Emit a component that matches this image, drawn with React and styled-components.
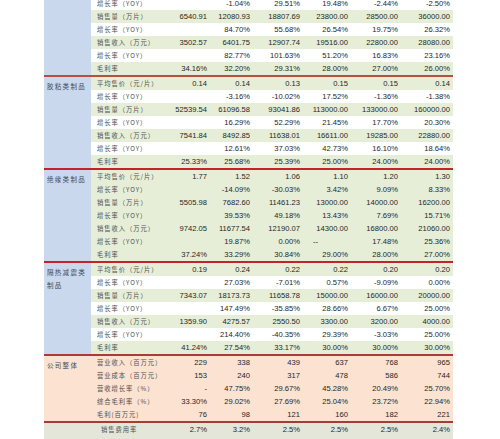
import styled, { createGlobalStyle } from "styled-components"

const GlobalStyle = createGlobalStyle`
    html, body {
        margin: 0;
        padding: 0;
        background: #ffffff;
        overflow: hidden;
    }
    #root {
        height: 439px;
        overflow: hidden;
    }
`

const palette = {
    green: '#e6eed8',
    white: '#ffffff',
    peach: '#fbe2d1',
    gray: '#e4e6da',
    blue: '#c9d8ec',
}

const Page = styled.div`
    padding-left: 44px;
`

const Table = styled.div`
    width: 409px;
    margin-top: -3px;
    display: flex;
    flex-direction: column;
`

const Section = styled.div`
    display: flex;
    border-top: ${({ $line }) => ($line ? `2px solid ${$line}` : 'none')};
`

const Category = styled.div`
    width: 47px;
    flex: none;
    box-sizing: border-box;
    padding: 3px 0 0 3px;
    background: ${({ $bg }) => $bg};
    font-family: "Noto Sans CJK SC", sans-serif;
    font-weight: 400;
    font-size: 6.5px;
    letter-spacing: 1.3px;
    line-height: 13px;
    color: #3f4a60;
    white-space: pre-line;
`

const Rows = styled.div`
    flex: 1;
    display: flex;
    flex-direction: column;
`

const Row = styled.div`
    display: grid;
    grid-template-columns: 70px 49px 43px 50px 48px 50px 52px;
    height: 13px;
    align-items: center;
    background: ${({ $bg }) => $bg};
`

const Label = styled.div`
    padding-left: ${({ $indent }) => ($indent ? 10 : 6)}px;
    font-family: "Noto Sans CJK SC", sans-serif;
    font-weight: 400;
    font-size: 6.3px;
    letter-spacing: 0.95px;
    color: #505050;
    white-space: nowrap;
    line-height: 13px;
`

const Num = styled.div`
    text-align: ${({ $left }) => ($left ? 'left' : 'right')};
    padding: ${({ $left }) => ($left ? '0 0 0 10px' : '0 3px 0 0')};
    font-family: "Liberation Sans", Arial, sans-serif;
    font-size: 7.6px;
    color: #262626;
    white-space: nowrap;
    line-height: 13px;
`

const G = palette.green
const W = palette.white

const sections = [
    {
        category: '',
        catBg: palette.blue,
        rows: [
            ['增长率（YOY）', W, ['', '-1.04%', '29.51%', '19.48%', '-2.44%', '-2.50%']],
            ['销售量（万片）', G, ['6540.91', '12080.93', '18807.69', '23800.00', '28500.00', '36000.00']],
            ['增长率（YOY）', W, ['', '84.70%', '55.68%', '26.54%', '19.75%', '26.32%']],
            ['销售收入（万元）', G, ['3502.57', '6401.75', '12907.74', '19516.00', '22800.00', '28080.00']],
            ['增长率（YOY）', W, ['', '82.77%', '101.63%', '51.20%', '16.83%', '23.16%']],
            ['毛利率', G, ['34.16%', '32.20%', '29.31%', '28.00%', '27.00%', '26.00%']],
        ],
    },
    {
        category: '胶粘类制品',
        catBg: palette.blue,
        line: '#b4513f',
        rows: [
            ['平均售价（元/片）', G, ['0.14', '0.14', '0.13', '0.15', '0.15', '0.14']],
            ['增长率（YOY）', W, ['', '-3.16%', '-10.02%', '17.52%', '-1.36%', '-1.38%']],
            ['销售量（万片）', G, ['52539.54', '61096.58', '93041.86', '113000.00', '133000.00', '160000.00']],
            ['增长率（YOY）', W, ['', '16.29%', '52.29%', '21.45%', '17.70%', '20.30%']],
            ['销售收入（万元）', G, ['7541.84', '8492.85', '11638.01', '16611.00', '19285.00', '22880.00']],
            ['增长率（YOY）', W, ['', '12.61%', '37.03%', '42.73%', '16.10%', '18.64%']],
            ['毛利率', G, ['25.33%', '25.68%', '25.39%', '25.00%', '24.00%', '24.00%']],
        ],
    },
    {
        category: '绝缘类制品',
        catBg: palette.blue,
        line: '#c3232c',
        rows: [
            ['平均售价（元/片）', G, ['1.77', '1.52', '1.06', '1.10', '1.20', '1.30']],
            ['增长率（YOY）', G, ['', '-14.09%', '-30.03%', '3.42%', '9.09%', '8.33%']],
            ['销售量（万片）', G, ['5505.98', '7682.60', '11461.23', '13000.00', '14000.00', '16200.00']],
            ['增长率（YOY）', G, ['', '39.53%', '49.18%', '13.43%', '7.69%', '15.71%']],
            ['销售收入（万元）', G, ['9742.05', '11677.54', '12190.07', '14300.00', '16800.00', '21060.00']],
            ['增长率（YOY）', G, ['', '19.87%', '0.00%', { v: '--', left: true }, '17.48%', '25.36%']],
            ['毛利率', G, ['37.24%', '33.29%', '30.84%', '29.00%', '28.00%', '27.00%']],
        ],
    },
    {
        category: '隔热减震类\n制品',
        catBg: palette.blue,
        line: '#c3232c',
        rows: [
            ['平均售价（元/片）', G, ['0.19', '0.24', '0.22', '0.22', '0.20', '0.20']],
            ['增长率（YOY）', W, ['', '27.03%', '-7.01%', '0.57%', '-9.09%', '0.00%']],
            ['销售量（万片）', G, ['7343.07', '18173.73', '11658.78', '15000.00', '16000.00', '20000.00']],
            ['增长率（YOY）', W, ['', '147.49%', '-35.85%', '28.66%', '6.67%', '25.00%']],
            ['销售收入（万元）', G, ['1359.90', '4275.57', '2550.50', '3300.00', '3200.00', '4000.00']],
            ['增长率（YOY）', W, ['', '214.40%', '-40.35%', '29.39%', '-3.03%', '25.00%']],
            ['毛利率', G, ['41.24%', '27.54%', '33.17%', '30.00%', '30.00%', '30.00%']],
        ],
    },
    {
        category: '公司整体',
        catBg: palette.peach,
        line: '#ad3b35',
        rows: [
            ['营业收入（百万元）', palette.peach, ['229', '338', '439', '637', '768', '965']],
            ['营业成本（百万元）', palette.peach, ['153', '240', '317', '478', '586', '744']],
            ['营收增长率（%）', palette.peach, ['-', '47.75%', '29.67%', '45.28%', '20.49%', '25.70%']],
            ['综合毛利率（%）', palette.peach, ['33.30%', '29.02%', '27.69%', '25.04%', '23.72%', '22.94%']],
            ['毛利(百万元)', palette.peach, ['76', '98', '121', '160', '182', '221']],
        ],
    },
    {
        category: '',
        catBg: palette.gray,
        line: '#9f3f37',
        indent: true,
        rows: [
            ['销售费用率', palette.gray, ['2.7%', '3.2%', '2.5%', '2.5%', '2.5%', '2.4%']],
            ['管理费用率', palette.gray, ['7.1%', '7.0%', '6.5%', '6.0%', '6.0%', '6.0%']],
        ],
    },
]

const DataRow = ({ label, bg, values, indent }) => (
    <Row $bg={bg}>
        <Label $indent={indent}>{label}</Label>
        {values.map((val, i) => {
            const cell = typeof val === 'object' ? val : { v: val }
            return <Num key={i} $left={cell.left}>{cell.v}</Num>
        })}
    </Row>
)

const App = () => {
    return (
        <>
            <GlobalStyle />
            <Page>
                <Table>
                    {sections.map((sec, i) => (
                        <Section key={i} $line={sec.line}>
                            <Category $bg={sec.catBg}>{sec.category}</Category>
                            <Rows>
                                {sec.rows.map(([label, bg, values], j) => (
                                    <DataRow key={j} label={label} bg={bg} values={values} indent={sec.indent} />
                                ))}
                            </Rows>
                        </Section>
                    ))}
                </Table>
            </Page>
        </>
    )
}

export default App
